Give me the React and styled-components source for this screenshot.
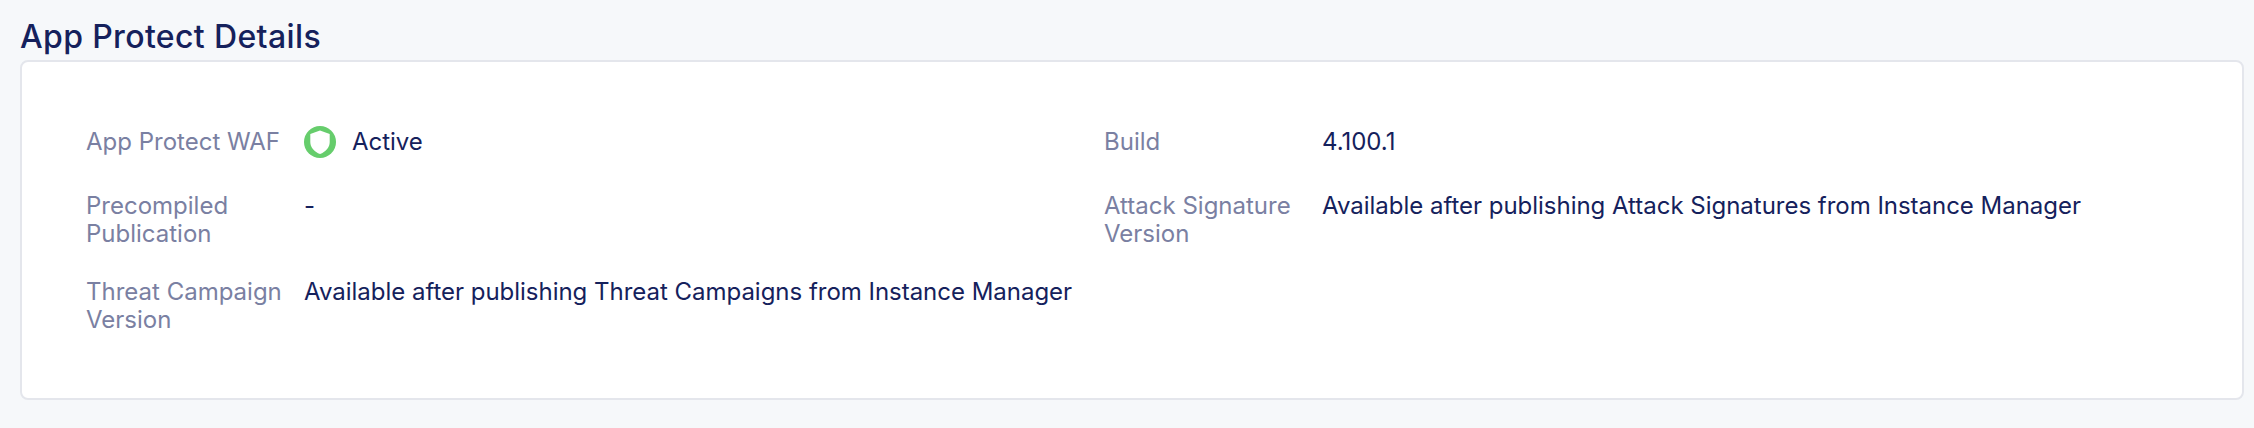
import React from 'react';
import styled, { createGlobalStyle } from 'styled-components';

const GlobalStyle = createGlobalStyle`
  * { box-sizing: border-box; }
  body {
    margin: 0;
    min-height: 428px;
    background: #f6f8fa;
    color: #15215c;
    font-family: Inter, sans-serif;
  }
`;
const Section = styled.section`
  padding: 18px 10px 28px 20px;
`;
const Title = styled.h2`
  margin: 0 0 4px;
  font-size: 32px;
  line-height: 38px;
  font-weight: 500;
  letter-spacing: 0.36px;
`;
const Card = styled.div`
  height: 340px;
  padding: 63px 64px;
  background: #fff;
  border: 2px solid #e4e6ec;
  border-radius: 8px;
`;
const Details = styled.dl`
  display: grid;
  grid-template-columns: 1018px 1fr;
  grid-template-rows: 37px;
  row-gap: 27px;
  margin: 0;
`;
const Item = styled.div`
  display: grid;
  grid-template-columns: 218px 1fr;
  font-size: 24px;
  line-height: 28px;
`;
const Label = styled.dt`
  max-width: 200px;
  padding-top: 3px;
  color: #7a80a2;
`;
const Value = styled.dd`
  display: flex;
  align-items: flex-start;
  margin: 0;
  padding-top: 3px;
  white-space: nowrap;
  letter-spacing: -0.02px;
`;
const ShieldIcon = styled.svg`
  width: 32px;
  height: 32px;
  margin: -2px 16px 0 0;
`;

const details = [
  { label: 'App Protect WAF', value: 'Active', active: true },
  { label: 'Build', value: '4.100.1' },
  { label: 'Precompiled Publication', value: '-' },
  { label: 'Attack Signature Version', value: 'Available after publishing Attack Signatures from Instance Manager' },
  { label: 'Threat Campaign Version', value: 'Available after publishing Threat Campaigns from Instance Manager' },
];

export default function App() {
  return (
    <>
      <GlobalStyle />
      <Section>
        <Title>App Protect Details</Title>
        <Card>
          <Details>
            {details.map(({ label, value, active }) => (
              <Item key={label}>
                <Label>{label}</Label>
                <Value>
                  {active && (
                    <ShieldIcon viewBox="0 0 32 32" aria-hidden="true">
                      <circle cx="16" cy="16" r="16" fill="#66cd6c" />
                      <path d="M16 4.5L25.7 8V16C25.7 21.5 21.5 26 16 28C10.5 26 6.3 21.5 6.3 16V8Z" fill="#fff" />
                    </ShieldIcon>
                  )}
                  {value}
                </Value>
              </Item>
            ))}
          </Details>
        </Card>
      </Section>
    </>
  );
}
